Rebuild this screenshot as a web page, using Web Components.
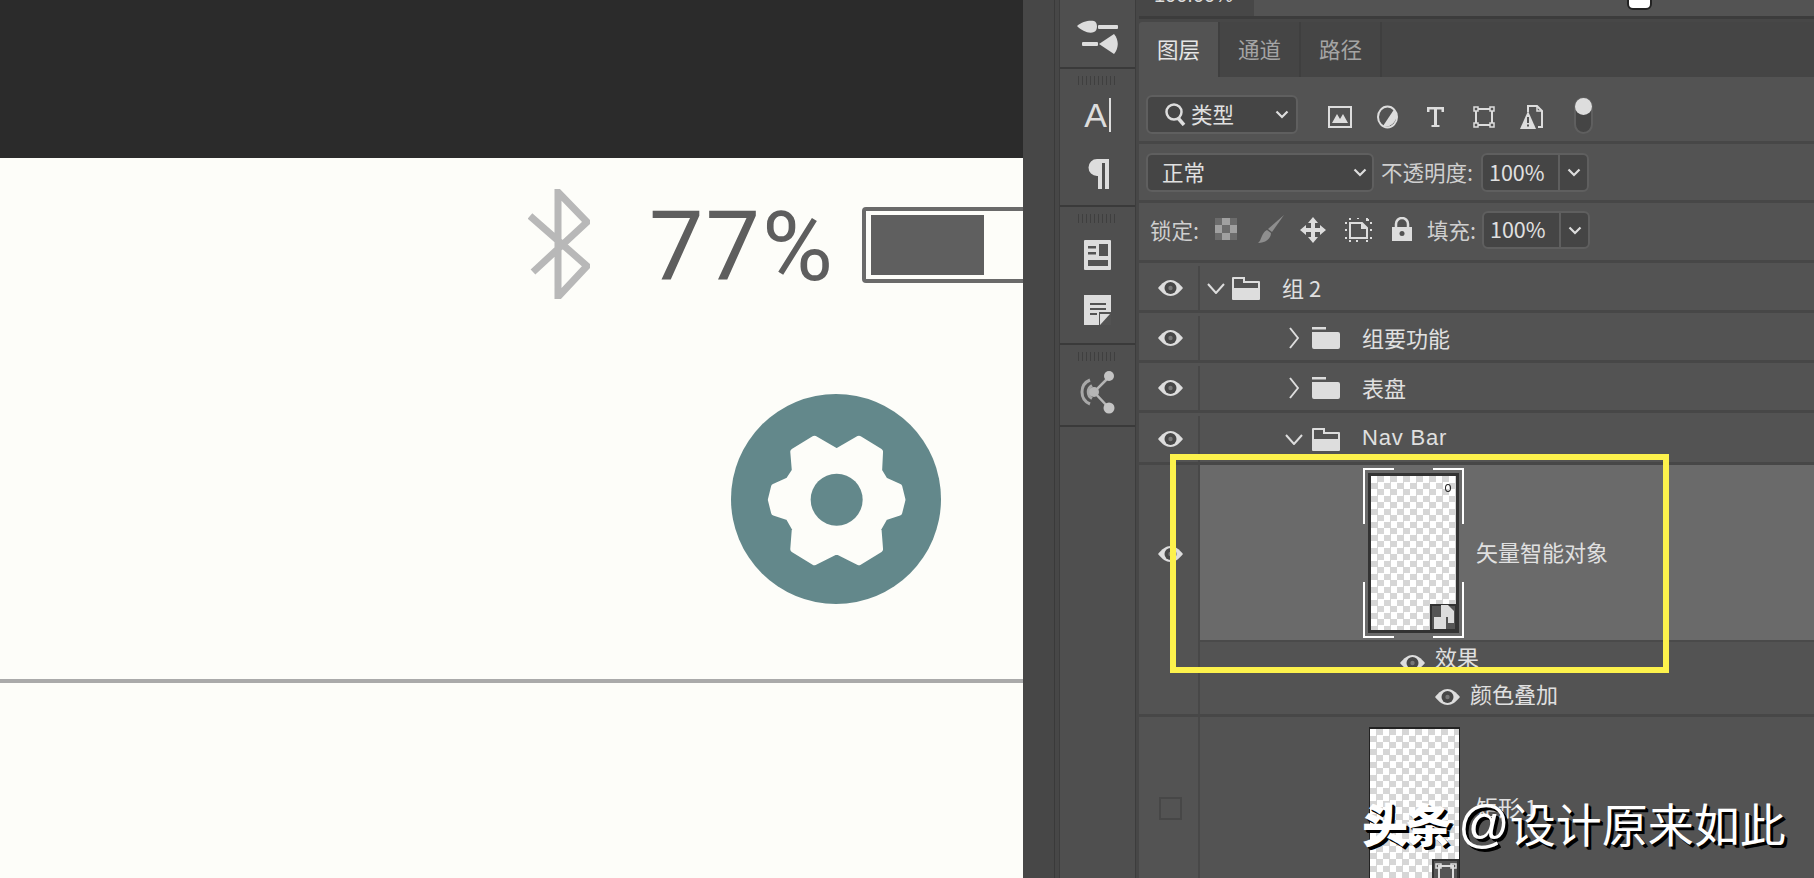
<!DOCTYPE html>
<html lang="zh">
<head>
<meta charset="utf-8">
<title>图层</title>
<style>
html, body { margin: 0; height: 100%; overflow: hidden; background: #535353; }
body { font-family: "Noto Sans CJK SC", "Liberation Sans", sans-serif; }
.app { display: flex; width: 1814px; height: 878px; overflow: hidden; position: relative; }
</style>
</head>
<body>
<div class="app">
  <ps-canvas></ps-canvas>
  <ps-toolstrip></ps-toolstrip>
  <ps-panel></ps-panel>
  <ps-highlight></ps-highlight>
  <ps-watermark></ps-watermark>
</div>

<script>
// all icons live here, sizes are the pixel sizes in the reference
var ICONS = {
  eye: [25, 16, '<path d="M0 8C4 3 8 0 12.5 0S21 3 25 8C21 13 17 16 12.5 16S4 13 0 8Z" fill="#ddd"/><circle cx="12.5" cy="8" r="6" fill="#474747"/><circle cx="12.500" cy="8" r="2.200" fill="#777"/>'],
  folder: [28, 22, '<path d="M0 0H14V2.500H0ZM0 5H26a2 2 0 0 1 2 2V20a2 2 0 0 1-2 2H2a2 2 0 0 1-2-2Z" fill="#ddd"/>'],
  folderOpen: [28, 23, '<path d="M0 1a1 1 0 0 1 1-1H13V4H27a1 1 0 0 1 1 1V22a1 1 0 0 1-1 1H1a1 1 0 0 1-1-1Z" fill="#ddd"/><path d="M2 2H11V6H26V11H2Z" fill="#535353"/>'],
  chevDown: [18, 11, '<path d="M1 1L9 10L17 1" fill="none" stroke="#ddd" stroke-width="2"/>'],
  chevRight: [10, 22, '<path d="M1 1L9 11L1 21" fill="none" stroke="#ddd" stroke-width="2"/>'],
  caret: [14, 9, '<path d="M1.500 1.500L7 7L12.500 1.500" fill="none" stroke="#ddd" stroke-width="2.200"/>'],
  search: [21, 24, '<circle cx="9" cy="10" r="7.500" fill="none" stroke="#ddd" stroke-width="2.500"/><path d="M13 16L19 23" stroke="#ddd" stroke-width="3.500"/>'],
  image: [24, 24, '<path d="M1 2H23V22H1Z" fill="none" stroke="#ddd" stroke-width="2"/><path d="M4 18L9 9L12 14L15 9L20 18Z" fill="#ddd"/>'],
  adjust: [21, 24, '<ellipse cx="10.500" cy="12" rx="9.500" ry="10.500" fill="#535353" stroke="#ddd" stroke-width="2"/><path d="M17 4.500A10 10.500 0 0 1 6 21Z" fill="#ddd"/>'],
  type: [19, 22, '<path d="M1 1H18V6H15.500V3.500H11V19H13.500V21H5.500V19H8V3.500H3.500V6H1Z" fill="#ddd"/>'],
  transform: [22, 22, '<path d="M3 3H19V19H3Z" fill="none" stroke="#ddd" stroke-width="2"/><g fill="#535353" stroke="#ddd" stroke-width="1.500"><rect x="1" y="1" width="4" height="4"/><rect x="17" y="1" width="4" height="4"/><rect x="1" y="17" width="4" height="4"/><rect x="17" y="17" width="4" height="4"/></g>'],
  smart: [23, 24, '<path d="M8 7V1H17L22 6V22H18" fill="none" stroke="#ddd" stroke-width="2"/><path d="M17 1V6H22" fill="none" stroke="#ddd" stroke-width="1.500"/><path d="M8 6L16 24H0Z" fill="#ddd"/><path d="M7 12H9V18H7ZM7 19.500H9V21.500H7Z" fill="#535353"/>'],
  checker: [22, 22, '<rect width="22" height="22" fill="#a0a0a0"/><path d="M0 0H7V7H0ZM15 0H22V7H15ZM7 7H15V15H7ZM0 15H7V22H0ZM15 15H22V22H15Z" fill="#6c6c6c"/>'],
  brush: [26, 28, '<path d="M26 0L14 17L10 14Z" fill="#8e8e8e"/><path d="M9 15L13 18C13 24 7 28 0 28C4 25 3 18 9 15Z" fill="#8e8e8e"/>'],
  move: [26, 26, '<path d="M13 0L18 6H15V11H20V8L26 13L20 18V15H15V20H18L13 26L8 20H11V15H6V18L0 13L6 8V11H11V6H8Z" fill="#ddd"/>'],
  artboard: [27, 24, '<path d="M5 5H17L22 10V20H5Z" fill="none" stroke="#ddd" stroke-width="2"/><path d="M16 5H17L22 10V11H16Z" fill="#ddd"/><path d="M0 5H2M5 0V2M12 0H14M22 0V2H24M25 5H27M25 12H27M25 20H27M22 22V24M12 22V24M5 22V24M0 12H2M0 20H2" stroke="#ddd" stroke-width="2"/>'],
  lock: [20, 24, '<path d="M4 10V7a6 6 0 0 1 12 0V10" fill="none" stroke="#ddd" stroke-width="2.500"/><path d="M0 10H20V24H0Z" fill="#ddd"/><circle cx="10" cy="16.500" r="2.500" fill="#535353"/>'],
  brushes: [41, 34, '<path d="M0 6C5 1 13 0 17 1C21 2 21 11 17 12C12 14 5 11 0 6Z" fill="#ddd"/><rect x="21" y="5" width="20" height="4" rx="1" fill="#ddd"/><rect x="5" y="22" width="16" height="4" rx="1" fill="#ddd"/><path d="M22 24L37 14C42 20 42 28 37 34Z" fill="#ddd"/>'],
  pilcrow: [24, 30, '<path d="M11 0H23V30H19V4H16V30H12V17H11a8.500 8.500 0 0 1 0-17Z" fill="#ddd"/>'],
  article: [27, 30, '<rect width="27" height="30" rx="1" fill="#ddd"/><path d="M4 6H12V8.500H4ZM4 12H12V14.500H4ZM15 4H24V16H15ZM4 20H24V26H4Z" fill="#535353"/>'],
  note: [27, 30, '<path d="M0 0H27V18L15 30H0Z" fill="#ddd"/><path d="M6 8H22V10H6ZM6 13H22V15H6ZM6 18H13V20H6Z" fill="#535353"/><path d="M15 17H27V30H15Z" fill="#535353"/><path d="M16 19H26L16 30Z" fill="#ddd"/>'],
  share: [36, 44, '<g fill="none" stroke="#a8a8a8" stroke-width="3"><path d="M10 10A13 13 0 0 0 10 34"/><path d="M12 15.500A7.500 7.500 0 0 0 12 28.500"/></g><path d="M29 7L14 22L29 38" fill="none" stroke="#b5b5b5" stroke-width="2.500"/><circle cx="14" cy="22" r="5" fill="#b5b5b5"/><circle cx="29" cy="6" r="5" fill="#c4c4c4"/><circle cx="29" cy="38" r="5.500" fill="#c4c4c4"/>'],
  rectShape: [24, 20, '<path d="M5 3H19V17H5Z" fill="none" stroke="#ddd" stroke-width="2"/><path d="M2 1H7V5H2ZM17 1H22V5H17Z" fill="none" stroke="#ddd" stroke-width="1.500"/>'],
  smartBadge: [20, 24, '<path d="M7 0H14L20 6V18H14V12H7Z" fill="#ddd"/><path d="M0 12H12V24H0Z" fill="#ddd"/>']
};

// <ps-icon name="eye">
class PsIcon extends HTMLElement {
  constructor(){
    super();
    this.attachShadow({mode:"open"});
  }
  connectedCallback(){
    var d = ICONS[this.getAttribute("name")];
    this.shadowRoot.innerHTML = `<style>:host{display:block;flex:none;line-height:0;}</style>
      <svg width="${d[0]}" height="${d[1]}" viewBox="0 0 ${d[0]} ${d[1]}">${d[2]}</svg>`;
  }
}
customElements.define("ps-icon", PsIcon);

// left part, the artboard with the status line of the watch design
var canvas_tpl = document.createElement("template");
canvas_tpl.innerHTML = `
<style>
:host { display: flex; flex-direction: column; flex: none; width: 1023px; height: 100%; background: #fdfdf9; overflow: hidden; }
.top { height: 158px; flex: none; background: #2b2b2b; }
.status { display: flex; align-items: center; height: 112px; margin-top: 30px; padding-left: 528px; flex: none; }
.status svg { flex: none; }
.pct { flex: none; font: 400 97px/112px Roboto, "Liberation Sans", sans-serif; color: #5e5e5e; margin: 6px 0 0 59px; letter-spacing: 2px; }
.batt { flex: none; width: 200px; height: 60px; margin-left: 27px; margin-top: 2px; border: 4px solid #6a6a6a; border-radius: 4px; padding: 4px; }
.batt i { display: block; width: 113px; height: 100%; margin-left: 1px; background: #5f5f5f; }
.gear { align-self: flex-end; margin: 93px 81px 0 0; flex: none; line-height: 0; }
.rule { height: 4px; margin-top: 74px; background: #aaa; flex: none; }
</style>
<div class="top"></div>
<div class="status">
  <svg width="62" height="110" viewBox="0 0 62 110"><path d="M2 27L59 77L30 108V3L59 33L5 83" fill="none" stroke="#b8b8b8" stroke-width="7" stroke-miterlimit="10"/></svg>
  <span class="pct">77%</span>
  <div class="batt"><i></i></div>
</div>
<div class="gear">
  <svg width="212" height="212" viewBox="0 0 636 636">
    <circle cx="318" cy="318" r="315" fill="#63888b"/>
    <path transform="translate(320 320) scale(.96) translate(-320 -320)" d="M250 130L320 170L390 130L455 170L452 230L470 260L515 280L525 320L515 360L470 375L450 410L455 475L390 515L320 480L250 515L185 475L190 410L170 375L125 360L115 320L125 280L170 260L190 230L185 170Z" fill="#fdfdf9" stroke="#fdfdf9" stroke-width="20" stroke-linejoin="round"/>
    <circle cx="320" cy="320" r="78" fill="#63888b"/>
  </svg>
</div>
<div class="rule"></div>
`;
class PsCanvas extends HTMLElement {
  constructor(){
    super();
    this.attachShadow({mode:"open"});
    this.shadowRoot.appendChild(canvas_tpl.content.cloneNode(true));
  }
}
customElements.define("ps-canvas", PsCanvas);

// the collapsed icon strip between canvas and layers panel
var strip_tpl = document.createElement("template");
strip_tpl.innerHTML = `
<style>
:host { display: flex; flex: none; width: 116px; height: 100%; background: #474747; }
.gutter { width: 31px; flex: none; border-right: 1px solid #3a3a3a; background: #474747; }
.col { width: 75px; margin-left: 4px; flex: none; background: #4f4f4f; border-left: 1px solid #3d3d3d; border-right: 1px solid #3d3d3d; }
.sec { display: flex; flex-direction: column; align-items: center; border-bottom: 2px solid #3a3a3a; box-sizing: border-box; }
.grip { width: 39px; height: 9px; flex: none; background: repeating-linear-gradient(90deg, #3f3f3f 0 1.500px, transparent 1.500px 4px); }
.a { font: 400 34px/34px "Liberation Sans", sans-serif; color: #ddd; display: flex; align-items: center; height: 33px; }
.a i { display: block; width: 2px; height: 34px; background: #ddd; margin-left: 2px; }
</style>
<div class="gutter"></div>
<div class="col">
  <div class="sec" style="height:69px;padding-top:20px"><ps-icon name="brushes"></ps-icon></div>
  <div class="sec" style="height:138px;padding-top:7px">
    <div class="grip"></div>
    <div class="a" style="margin-top:13px">A<i></i></div>
    <div style="margin-top:28px"><ps-icon name="pilcrow"></ps-icon></div>
  </div>
  <div class="sec" style="height:138px;padding-top:7px">
    <div class="grip"></div>
    <div style="margin-top:17px"><ps-icon name="article"></ps-icon></div>
    <div style="margin-top:25px"><ps-icon name="note"></ps-icon></div>
  </div>
  <div class="sec" style="height:82px;padding-top:7px">
    <div class="grip"></div>
    <div style="margin-top:9px"><ps-icon name="share"></ps-icon></div>
  </div>
</div>
`;
class PsToolstrip extends HTMLElement {
  constructor(){
    super();
    this.attachShadow({mode:"open"});
    this.shadowRoot.appendChild(strip_tpl.content.cloneNode(true));
  }
}
customElements.define("ps-toolstrip", PsToolstrip);

// dropdown + value field used in the option rows
var field_tpl = document.createElement("template");
field_tpl.innerHTML = `
<style>
:host { display: flex; flex: none; align-items: center; box-sizing: border-box; background: #454545; border: 2px solid #5f5f5f; border-radius: 6px; color: #e0e0e0; font: 400 21.5px/1 "Noto Sans CJK SC", "Liberation Sans", sans-serif; }
.val { flex: 1; padding: 0 0 2px var(--pl, 10px); display: flex; align-items: center; gap: 5px; white-space: nowrap; }
.btn { flex: none; display: flex; align-items: center; justify-content: center; width: var(--bw, 26px); align-self: stretch; }
:host([split]) .btn { border-left: 2px solid #5f5f5f; }
</style>
<div class="val"><slot></slot></div>
<div class="btn"><ps-icon name="caret"></ps-icon></div>
`;
class PsField extends HTMLElement {
  constructor(){
    super();
    this.attachShadow({mode:"open"});
    this.shadowRoot.appendChild(field_tpl.content.cloneNode(true));
  }
}
customElements.define("ps-field", PsField);

// one row of the layers list
var layer_tpl = document.createElement("template");
layer_tpl.innerHTML = `
<style>
:host { display: flex; box-sizing: border-box; height: 50px; padding-top: 3px; border-bottom: 3px solid #474747; color: #e0e0e0; font: 400 22px/1 "Noto Sans CJK SC", "Liberation Sans", sans-serif; }
.eye { width: 61px; flex: none; display: flex; align-items: center; justify-content: center; border-right: 2px solid #484848; box-sizing: border-box; padding-left: 3px; }
.body { flex: 1; min-width: 0; display: flex; align-items: center; }
</style>
<div class="eye"><slot name="eye"></slot></div>
<div class="body"><slot></slot></div>
`;
class PsLayer extends HTMLElement {
  constructor(){
    super();
    this.attachShadow({mode:"open"});
    this.shadowRoot.appendChild(layer_tpl.content.cloneNode(true));
  }
}
customElements.define("ps-layer", PsLayer);

// checkerboard layer thumbnail
var thumb_tpl = document.createElement("template");
thumb_tpl.innerHTML = `
<style>
:host { display: block; position: relative; flex: none; box-sizing: border-box; width: 91px; height: 160px; border: 3px solid #333; background: repeating-conic-gradient(#d6d6d6 0 25%, #fff 0 50%) 0 0 / 13px 13px; }
:host([plain]) { border-color: #222; border-width: 2px 1px 0; height: 200px; }
.badge { position: absolute; right: -1px; bottom: -1px; width: 27px; height: 27px; background: #555; border: 2px solid #333; box-sizing: border-box; display: flex; align-items: center; justify-content: center; }
:host([plain]) .badge { bottom: auto; top: 130px; right: 0; }
.o { position: absolute; right: 5px; top: 8px; width: 4px; height: 6px; border: 1px solid #222; border-radius: 50%; }
.corner { position: absolute; border: 0 solid #fff; width: 29px; height: 54px; }
.tl { left: -8px; top: -8px; border-width: 2px 0 0 2px; }
.tr { right: -8px; top: -8px; border-width: 2px 2px 0 0; }
.bl { left: -8px; bottom: -8px; border-width: 0 0 2px 2px; }
.br { right: -8px; bottom: -8px; border-width: 0 2px 2px 0; }
</style>
<slot></slot>
`;
class PsThumb extends HTMLElement {
  constructor(){
    super();
    this.attachShadow({mode:"open"});
    this.shadowRoot.appendChild(thumb_tpl.content.cloneNode(true));
    var sel = this.hasAttribute("selected");
    var extra = "";
    if (sel) extra = '<div class="o"></div><div class="corner tl"></div><div class="corner tr"></div><div class="corner bl"></div><div class="corner br"></div>';
    var icon = sel ? "smartBadge" : "rectShape";
    this.shadowRoot.appendChild(document.createRange().createContextualFragment(extra + '<div class="badge"><ps-icon name="' + icon + '"></ps-icon></div>'));
  }
}
customElements.define("ps-thumb", PsThumb);

// the layers panel itself
var panel_tpl = document.createElement("template");
panel_tpl.innerHTML = `
<style>
:host { display: flex; flex-direction: column; flex: 1; min-width: 0; height: 100%; background: #535353; color: #e0e0e0; font: 400 21.5px/1 "Noto Sans CJK SC", "Liberation Sans", sans-serif; }
.above { display: flex; flex: none; height: 16px; position: relative; background: #535353; border-bottom: 3px solid #3c3c3c; }
.above .pct { width: 115px; box-sizing: border-box; height: 100%; background: #474747; padding-left: 15px; overflow: hidden; }
.above .pct span { display: block; font: 400 20px/20px "Liberation Sans", sans-serif; color: #ddd; margin-top: -15px; }
.thumb { position: absolute; left: 488px; top: -6px; width: 25px; height: 16px; background: #fff; border: 2px solid #222; border-radius: 6px; box-sizing: border-box; }
.gap { height: 3px; flex: none; background: #474747; }
.tabs { display: flex; flex: none; height: 55px; background: #454545; }
.tabs div { display: flex; align-items: center; justify-content: center; width: 81px; padding-bottom: 2px; border-right: 2px solid #3f3f3f; box-sizing: border-box; color: #a4a4a4; }
.tabs div.on { background: #535353; color: #e6e6e6; border-radius: 3px 0 0 0; }
.opt { display: flex; flex: none; box-sizing: border-box; padding-left: 7px; border-bottom: 3px solid #474747; align-items: flex-start; }
.lbl { flex: none; color: #cfcfcf; white-space: nowrap; }
.toggle { flex: none; position: relative; box-sizing: border-box; width: 19px; height: 37px; border: 2px solid #5f5f5f; border-radius: 10px; background: #454545; }
.toggle i { position: absolute; left: -1px; top: -1px; width: 17px; height: 17px; border-radius: 50%; background: #ddd; }
.list { flex: 1; min-height: 0; overflow: hidden; }
.txt { white-space: nowrap; margin-top: -2px; }
</style>
<div class="above"><div class="pct"><span>100.00%</span></div><div class="thumb"></div></div>
<div class="gap"></div>
<div class="tabs"><div class="on">图层</div><div>通道</div><div>路径</div></div>

<div class="opt" style="height:67px;padding-top:18px">
  <ps-field style="width:152px;height:39px;--pl:17px;--bw:28px"><ps-icon name="search"></ps-icon><span>类型</span></ps-field>
  <ps-icon name="image" style="margin:10px 0 0 30px"></ps-icon>
  <ps-icon name="adjust" style="margin:10px 0 0 25px"></ps-icon>
  <ps-icon name="type" style="margin:11px 0 0 28px"></ps-icon>
  <ps-icon name="transform" style="margin:11px 0 0 28px"></ps-icon>
  <ps-icon name="smart" style="margin:10px 0 0 25px"></ps-icon>
  <div class="toggle" style="margin:2px 0 0 31px"><i></i></div>
</div>

<div class="opt" style="height:59px;padding-top:9px">
  <ps-field style="width:228px;height:39px;--pl:14px;--bw:25px">正常</ps-field>
  <span class="lbl" style="margin:8px 0 0 7px;width:97px">不透明度:</span>
  <ps-field split style="width:108px;height:39px;--pl:6px;--bw:27px;margin-left:3px">100%</ps-field>
</div>

<div class="opt" style="height:60px;padding-top:8px;padding-left:11px">
  <span class="lbl" style="margin-top:8px;width:52px">锁定:</span>
  <ps-icon name="checker" style="margin:7px 0 0 13px"></ps-icon>
  <ps-icon name="brush" style="margin:4px 0 0 21px"></ps-icon>
  <ps-icon name="move" style="margin:6px 0 0 16px"></ps-icon>
  <ps-icon name="artboard" style="margin:7px 0 0 19px"></ps-icon>
  <ps-icon name="lock" style="margin:6px 0 0 20px"></ps-icon>
  <span class="lbl" style="margin:8px 0 0 15px;width:53px">填充:</span>
  <ps-field split style="width:108px;height:38px;--pl:6px;--bw:27px;margin-left:2px">100%</ps-field>
</div>

<div class="list">
  <ps-layer>
    <ps-icon slot="eye" name="eye"></ps-icon>
    <ps-icon name="chevDown" style="margin-left:7px"></ps-icon>
    <ps-icon name="folderOpen" style="margin-left:7px"></ps-icon>
    <span class="txt" style="margin-left:22px">组 2</span>
  </ps-layer>
  <ps-layer>
    <ps-icon slot="eye" name="eye"></ps-icon>
    <ps-icon name="chevRight" style="margin-left:89px"></ps-icon>
    <ps-icon name="folder" style="margin-left:13px"></ps-icon>
    <span class="txt" style="margin-left:22px">组要功能</span>
  </ps-layer>
  <ps-layer>
    <ps-icon slot="eye" name="eye"></ps-icon>
    <ps-icon name="chevRight" style="margin-left:89px"></ps-icon>
    <ps-icon name="folder" style="margin-left:13px"></ps-icon>
    <span class="txt" style="margin-left:22px">表盘</span>
  </ps-layer>
  <ps-layer style="height:52px">
    <ps-icon slot="eye" name="eye"></ps-icon>
    <ps-icon name="chevDown" style="margin-left:85px"></ps-icon>
    <ps-icon name="folderOpen" style="margin-left:9px"></ps-icon>
    <span class="txt" style="margin-left:22px;font-family:'Liberation Sans',sans-serif;letter-spacing:.8px">Nav Bar</span>
  </ps-layer>
  <ps-layer style="height:177px;padding-top:0;border-bottom:0">
    <ps-icon slot="eye" name="eye"></ps-icon>
    <div style="flex:1;align-self:stretch;display:flex;align-items:center;background:#6a6a6a;border-bottom:2px solid #4a4a4a;box-sizing:border-box">
      <ps-thumb selected style="margin-left:168px"></ps-thumb>
      <span class="txt" style="margin:-4px 0 0 17px">矢量智能对象</span>
    </div>
  </ps-layer>
  <ps-layer style="height:37px;padding-top:0;border-bottom:0">
    <ps-icon name="eye" style="margin:4px 0 0 200px"></ps-icon>
    <span class="txt" style="margin:-10px 0 0 10px">效果</span>
  </ps-layer>
  <ps-layer style="height:38px;padding-top:0;border-bottom:3px solid #474747">
    <ps-icon name="eye" style="margin-left:235px"></ps-icon>
    <span class="txt" style="margin:-7px 0 0 10px">颜色叠加</span>
  </ps-layer>
  <ps-layer style="height:161px;padding-top:0;border-bottom:0">
    <div slot="eye" style="width:23px;height:23px;border:2px solid #474747;box-sizing:border-box;margin-top:22px"></div>
    <div style="align-self:flex-start;margin:10px 0 0 169px"><ps-thumb plain></ps-thumb></div>
    <span class="txt" style="margin:16px 0 0 16px">矩形 1</span>
  </ps-layer>
</div>
`;
class PsPanel extends HTMLElement {
  constructor(){
    super();
    this.attachShadow({mode:"open"});
    this.shadowRoot.appendChild(panel_tpl.content.cloneNode(true));
  }
}
customElements.define("ps-panel", PsPanel);

// yellow annotation frame drawn over the layers list
class PsHighlight extends HTMLElement {
  constructor(){
    super();
    this.attachShadow({mode:"open"});
    this.shadowRoot.innerHTML = `<style>:host{position:absolute;left:1170px;top:454px;width:499px;height:219px;box-sizing:border-box;border:6px solid #fdf24c;pointer-events:none;}</style>`;
  }
}
customElements.define("ps-highlight", PsHighlight);

// watermark of the source site, sits on top of everything
class PsWatermark extends HTMLElement {
  constructor(){
    super();
    this.attachShadow({mode:"open"});
    this.shadowRoot.innerHTML = `<style>
      :host{position:absolute;left:1362px;top:794px;white-space:nowrap;color:#fff;font:400 46px/56px "Noto Sans CJK SC","Liberation Sans",sans-serif;text-shadow:2px 2px 0 #000,3px 3px 0 #000;}
      b{font-weight:900;letter-spacing:-2px;}
      .at{font-family:"Liberation Sans",sans-serif;font-size:51px;margin-left:8px;}
    </style><b>头条</b><span class="at">@</span>设计原来如此`;
  }
}
customElements.define("ps-watermark", PsWatermark);
</script>
</body>
</html>
